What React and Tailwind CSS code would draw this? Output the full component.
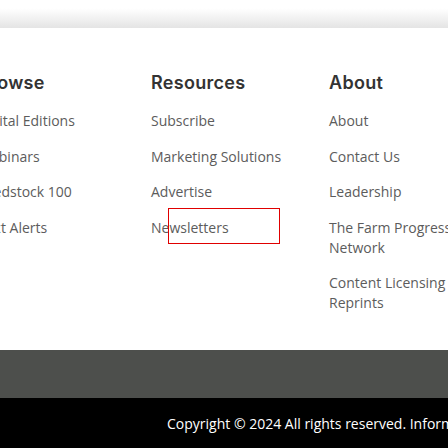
const columns = [
  {
    title: "Browse",
    width: "w-[173px]",
    links: ["Digital Editions", "Webinars", "Seedstock 100", "Text Alerts"],
  },
  {
    title: "Resources",
    width: "w-[178px]",
    links: ["Subscribe", "Marketing Solutions", "Advertise", "Newsletters"],
  },
  {
    title: "About",
    width: "w-[178px]",
    links: ["About", "Contact Us", "Leadership", "The Farm Progress Network", "Content Licensing Reprints"],
  },
];

export default function App() {
  return (
    <div className="h-[448px] w-[448px] overflow-hidden bg-white font-['Open_Sans',sans-serif]">
      <div className="h-[28px] bg-gradient-to-b from-white from-30% to-[#e4e4e4]" />

      <div className="flex h-[322px] pt-[43px] ml-[-22px]">
        {columns.map((col) => (
          <div key={col.title} className={`relative shrink-0 pr-4 ${col.width}`}>
            <h3 className="font-['Inter',sans-serif] text-[18px] font-semibold leading-[24px] tracking-[0.3px] text-[#333]">
              {col.title}
            </h3>
            <ul className="mt-[16px] flex flex-col gap-[15.6px]">
              {col.links.map((link) => (
                <li key={link} className="relative text-[14px] leading-[20px] text-[#5c5c5c]">
                  {link}
                  {link === "Newsletters" && (
                    <span className="absolute left-[17px] top-[-10px] h-[36px] w-[112px] border border-[#e00000]" />
                  )}
                </li>
              ))}
            </ul>
          </div>
        ))}
      </div>

      <div className="h-[48px] bg-[#4d4f4c]" />
      <div className="flex h-[50px] items-center bg-black pl-[167px]">
        <p className="whitespace-nowrap text-[14px] text-white">
          Copyright © 2024 All rights reserved. Informa Markets
        </p>
      </div>
    </div>
  );
}
